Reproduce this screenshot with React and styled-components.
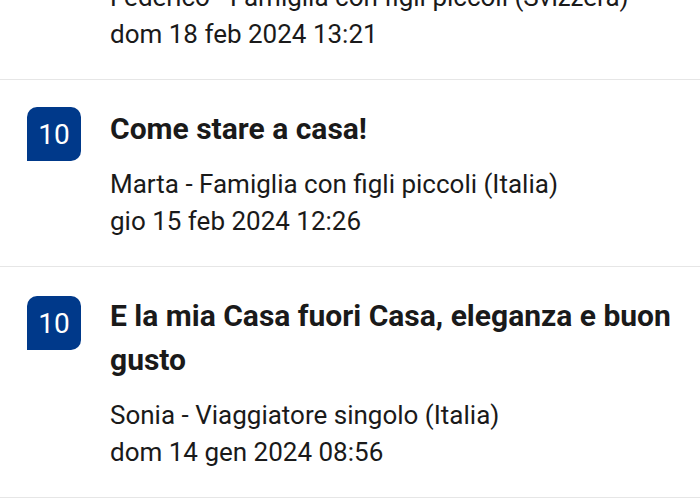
import React from 'react';
import styled, { createGlobalStyle } from 'styled-components';

const GlobalStyle = createGlobalStyle`
  html, body {
    margin: 0;
    padding: 0;
    background: #ffffff;
  }
  body {
    font-family: Roboto, "Noto Sans", "Liberation Sans", sans-serif;
    -webkit-font-smoothing: antialiased;
  }
`;

const Page = styled.div`
  width: 700px;
  height: 500px;
  overflow: hidden;
  background: #ffffff;
`;

const ReviewList = styled.ul`
  list-style: none;
  margin: -107px 0 0 0;
  padding: 0;
`;

const ReviewItem = styled.li`
  display: flex;
  align-items: flex-start;
  gap: 29px;
  padding: 27px 20px 26px 27px;
  border-bottom: 1px solid #e6e6e6;
`;

const ScoreBadge = styled.div`
  flex: 0 0 54px;
  width: 54px;
  height: 54px;
  margin-top: ${(p) => p.$offset || 0}px;
  display: flex;
  align-items: center;
  justify-content: center;
  background: #00398a;
  color: #ffffff;
  font-size: 28px;
  border-radius: 10px 10px 10px 0;
`;

const ReviewBody = styled.div`
  display: flex;
  flex-direction: column;
  gap: 15px;
  min-width: 0;
`;

const ReviewTitle = styled.h3`
  margin: 0;
  font-size: 30px;
  line-height: 44px;
  font-weight: 700;
  color: #1a1a1a;
`;

const ReviewMeta = styled.div`
  font-size: 26px;
  line-height: 37px;
  color: #1a1a1a;
`;

const reviews = [
  {
    score: 10,
    title: 'Tutto perfetto',
    author: 'Federico - Famiglia con figli piccoli (Svizzera)',
    date: 'dom 18 feb 2024 13:21',
  },
  {
    score: 10,
    title: 'Come stare a casa!',
    author: 'Marta - Famiglia con figli piccoli (Italia)',
    date: 'gio 15 feb 2024 12:26',
  },
  {
    score: 10,
    title: 'E la mia Casa fuori Casa, eleganza e buon gusto',
    author: 'Sonia - Viaggiatore singolo (Italia)',
    date: 'dom 14 gen 2024 08:56',
    offset: 2,
  },
];

export default function App() {
  return (
    <Page>
      <GlobalStyle />
      <ReviewList>
        {reviews.map((r) => (
          <ReviewItem key={r.date}>
            <ScoreBadge $offset={r.offset}>{r.score}</ScoreBadge>
            <ReviewBody>
              <ReviewTitle>{r.title}</ReviewTitle>
              <ReviewMeta>
                <div>{r.author}</div>
                <div>{r.date}</div>
              </ReviewMeta>
            </ReviewBody>
          </ReviewItem>
        ))}
      </ReviewList>
    </Page>
  );
}
